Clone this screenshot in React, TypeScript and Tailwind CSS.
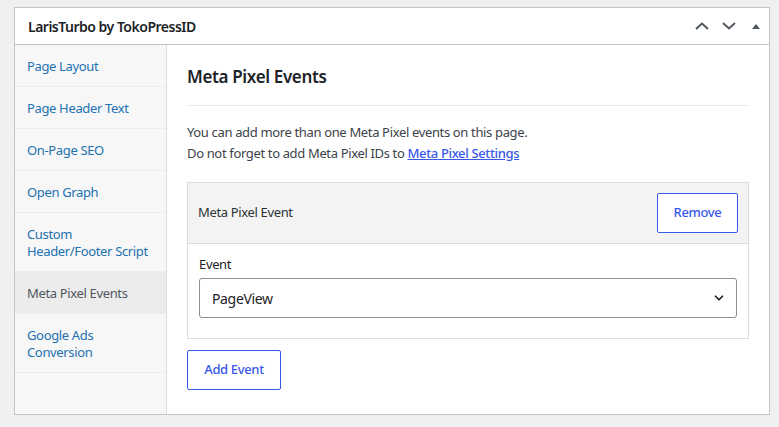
import { ChevronDown } from "lucide-react";

const font = { fontFamily: '"Noto Sans", "Open Sans", sans-serif' };

const menu: { label: string[]; active?: boolean }[] = [
  { label: ["Page Layout"] },
  { label: ["Page Header Text"] },
  { label: ["On-Page SEO"] },
  { label: ["Open Graph"] },
  { label: ["Custom", "Header/Footer Script"] },
  { label: ["Meta Pixel Events"], active: true },
  { label: ["Google Ads", "Conversion"] },
];

function HeaderIcons() {
  return (
    <div className="flex items-center gap-[13px] text-[#50575e]">
      <svg width="14" height="8" viewBox="0 0 14 8" fill="none">
        <path d="M1 7 L7 1.5 L13 7" stroke="currentColor" strokeWidth="2" />
      </svg>
      <svg width="14" height="8" viewBox="0 0 14 8" fill="none">
        <path d="M1 1 L7 6.5 L13 1" stroke="currentColor" strokeWidth="2" />
      </svg>
      <svg width="8" height="5" viewBox="0 0 8 5" className="ml-[3px]">
        <path d="M0 5 L4 0 L8 5 Z" fill="currentColor" />
      </svg>
    </div>
  );
}

export default function App() {
  return (
    <div className="min-h-screen bg-[#f0f0f1] pt-[7px] pl-[14px] tracking-[-0.35px]" style={font}>
      <div className="w-[756px] border border-[#c3c4c7] bg-white">
        <div className="flex h-[37px] items-center justify-between border-b border-[#c3c4c7] pl-[13px] pr-[9px]">
          <h1 className="text-[14px] font-semibold text-[#1d2327] tracking-[-0.5px]">
            LarisTurbo by TokoPressID
          </h1>
          <HeaderIcons />
        </div>
        <div className="flex">
          <ul className="w-[152px] shrink-0 border-r border-[#dcdcde] bg-[#f7f7f7]">
            {menu.map((item) => (
              <li
                key={item.label.join(" ")}
                className={`whitespace-nowrap border-b px-[12px] pt-[13px] pb-[11px] text-[13px] leading-[17px] ${
                  item.active
                    ? "border-transparent bg-[#ececec] text-[#50575e]"
                    : "border-[#ececec] text-[#2271b1]"
                }`}
              >
                {item.label.map((l) => (
                  <div key={l}>{l}</div>
                ))}
              </li>
            ))}
          </ul>
          <div className="flex-1 px-[20px] pt-[20px] pb-[24px]">
            <h2 className="border-b border-[#e8e8e8] pb-[16px] text-[17px] font-semibold leading-[24px] text-[#1d2327]">
              Meta Pixel Events
            </h2>
            <p className="mt-[16px] text-[13px] leading-[21px] text-[#3c434a]">
              You can add more than one Meta Pixel events on this page.
              <br />
              Do not forget to add Meta Pixel IDs to{" "}
              <a href="#" className="font-medium text-[#3858e9] underline">
                Meta Pixel Settings
              </a>
            </p>
            <div className="mt-[18px] border border-[#dcdcde]">
              <div className="flex h-[61px] items-center justify-between border-b border-[#dcdcde] bg-[#f3f3f3] px-[10px]">
                <span className="text-[13px] text-[#2c3338]">Meta Pixel Event</span>
                <button className="h-[40px] w-[81px] rounded-[2px] border border-[#3858e9] bg-white text-[13px] font-medium text-[#3858e9]">
                  Remove
                </button>
              </div>
              <div className="px-[11px] pt-[10px] pb-[20px]">
                <label className="block text-[13px] leading-[20px] text-[#1d2327]">Event</label>
                <div className="mt-[4px] flex h-[40px] items-center justify-between rounded-[3px] border border-[#8c8f94] pr-[10px] pl-[12px]">
                  <span className="text-[14px] text-[#1d2327]">PageView</span>
                  <ChevronDown className="h-[14px] w-[14px] text-[#1d2327]" strokeWidth={3} />
                </div>
              </div>
            </div>
            <button className="mt-[11px] h-[40px] w-[94px] rounded-[2px] border border-[#3858e9] bg-white text-[13px] font-medium text-[#3858e9]">
              Add Event
            </button>
          </div>
        </div>
      </div>
    </div>
  );
}
